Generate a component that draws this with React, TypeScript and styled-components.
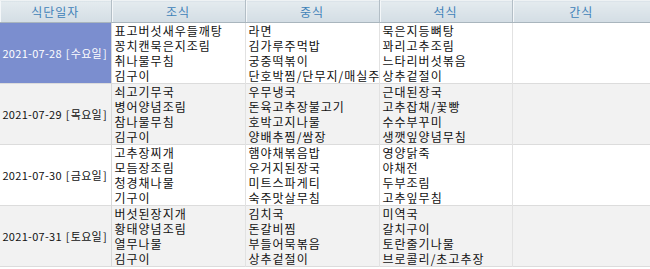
import styled, { createGlobalStyle } from "styled-components";

const GlobalStyle = createGlobalStyle`
  html, body {
    margin: 0;
    padding: 0;
    background: #ffffff;
  }
  body {
    font-family: "Noto Sans CJK KR", "Noto Sans", sans-serif;
  }
`;

type Meal = {
  date: string;
  day: string;
  breakfast: string[];
  lunch: string[];
  dinner: string[];
  snack: string[];
};

const MEALS: Meal[] = [
  {
    date: "2021-07-28",
    day: "수요일",
    breakfast: ["표고버섯새우들깨탕", "꽁치캔묵은지조림", "취나물무침", "김구이"],
    lunch: ["라면", "김가루주먹밥", "궁중떡볶이", "단호박찜/단무지/매실주스"],
    dinner: ["묵은지등뼈탕", "꽈리고추조림", "느타리버섯볶음", "상추겉절이"],
    snack: [],
  },
  {
    date: "2021-07-29",
    day: "목요일",
    breakfast: ["쇠고기무국", "병어양념조림", "참나물무침", "김구이"],
    lunch: ["우무냉국", "돈육고추장불고기", "호박고지나물", "양배추찜/쌈장"],
    dinner: ["근대된장국", "고추잡채/꽃빵", "수수부꾸미", "생깻잎양념무침"],
    snack: [],
  },
  {
    date: "2021-07-30",
    day: "금요일",
    breakfast: ["고추장찌개", "모듬장조림", "청경채나물", "기구이"],
    lunch: ["햄야채볶음밥", "우거지된장국", "미트스파게티", "숙주맛살무침"],
    dinner: ["영양닭죽", "야채전", "두부조림", "고추잎무침"],
    snack: [],
  },
  {
    date: "2021-07-31",
    day: "토요일",
    breakfast: ["버섯된장지개", "황태양념조림", "열무나물", "김구이"],
    lunch: ["김치국", "돈갈비찜", "부들어묵볶음", "상추겉절이"],
    dinner: ["미역국", "갈치구이", "토란줄기나물", "브로콜리/초고추장"],
    snack: [],
  },
];

const Table = styled.table`
  width: 650px;
  table-layout: fixed;
  border-collapse: collapse;
  font-size: 12px;
  color: #111111;
`;

const HeadCell = styled.th`
  height: 21px;
  padding: 0;
  font-weight: normal;
  font-size: 12px;
  letter-spacing: 1px;
  color: #3f82b8;
  text-align: center;
  background: linear-gradient(#e4ebef, #d3dde4);
  border-top: 1px solid #eef2f4;
  border-bottom: 1px solid #a9b5bd;
  border-right: 1px solid #b3bec6;
  box-shadow: inset 1px 0 0 #f4f7f9;

  &:last-child {
    border-right: none;
  }
`;

const Row = styled.tr<{ $striped: boolean }>`
  background: ${({ $striped }) => ($striped ? "#f2f2f2" : "#ffffff")};
  border-bottom: 1px solid #dcdcdc;
`;

const DateCell = styled.td<{ $selected: boolean }>`
  height: 60px;
  padding: 0 1px;
  font-size: 11px;
  letter-spacing: 0.3px;
  text-align: center;
  white-space: nowrap;
  overflow: hidden;
  background: ${({ $selected }) => ($selected ? "#7b8ecf" : "transparent")};
  color: ${({ $selected }) => ($selected ? "#ffffff" : "#111111")};
  border-right: 1px solid #d8d8d8;
`;

const Bracket = styled.span`
  margin: 0 1px;
`;

const MenuCell = styled.td`
  height: 60px;
  padding: 0 3px;
  vertical-align: middle;
  overflow: hidden;
  border-right: 1px solid #e2e2e2;

  &:last-child {
    border-right: none;
  }
`;

const MenuLine = styled.div`
  line-height: 15px;
  letter-spacing: 1px;
  white-space: nowrap;
`;

const COLUMNS = ["식단일자", "조식", "중식", "석식", "간식"];
const WIDTHS = [111, 134, 134, 133, 138];

function MenuList({ items }: { items: string[] }) {
  return (
    <MenuCell>
      {items.map((item) => (
        <MenuLine key={item}>{item}</MenuLine>
      ))}
    </MenuCell>
  );
}

export default function App() {
  return (
    <>
      <GlobalStyle />
      <Table>
        <colgroup>
          {WIDTHS.map((w, i) => (
            <col key={i} style={{ width: w }} />
          ))}
        </colgroup>
        <thead>
          <tr>
            {COLUMNS.map((c) => (
              <HeadCell key={c}>{c}</HeadCell>
            ))}
          </tr>
        </thead>
        <tbody>
          {MEALS.map((meal, i) => (
            <Row key={meal.date} $striped={i % 2 === 1}>
              <DateCell $selected={i === 0}>
                {meal.date} <Bracket>[</Bracket>
                {meal.day}
                <Bracket>]</Bracket>
              </DateCell>
              <MenuList items={meal.breakfast} />
              <MenuList items={meal.lunch} />
              <MenuList items={meal.dinner} />
              <MenuList items={meal.snack} />
            </Row>
          ))}
        </tbody>
      </Table>
    </>
  );
}
